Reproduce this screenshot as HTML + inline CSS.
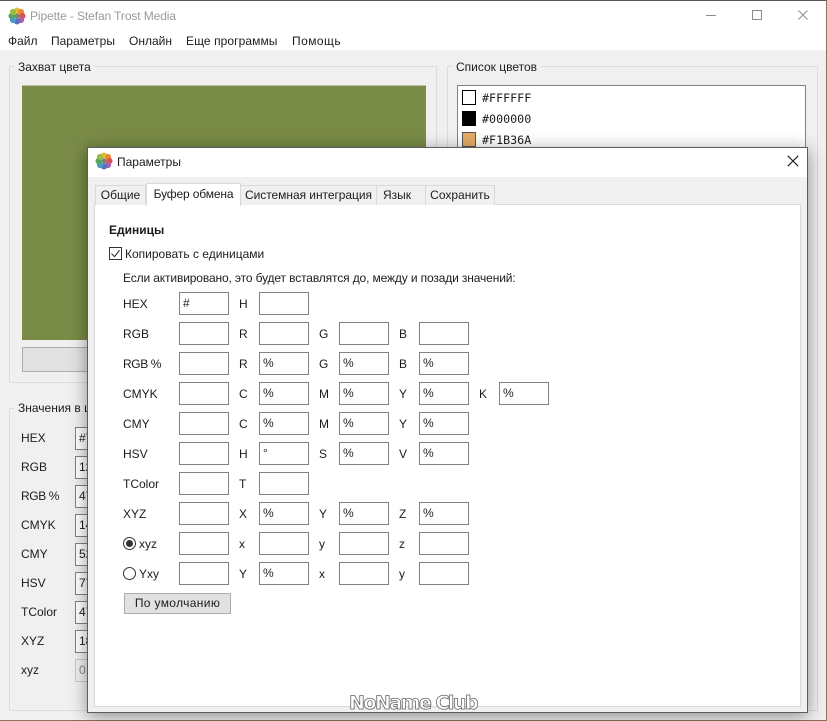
<!DOCTYPE html>
<html><head><meta charset="utf-8">
<style>
html,body{margin:0;padding:0;width:827px;height:721px;overflow:hidden;background:#8a7358}
*{box-sizing:border-box}
body{position:relative;font-family:"Liberation Sans",sans-serif;font-size:12px;color:#1c1c1c}
.a{position:absolute}
.t{position:absolute;white-space:nowrap;line-height:16px;height:16px}
.b{position:absolute;width:50px;height:23px;border:1px solid #828282;background:#fff;font-size:12px;line-height:21px;padding-left:3px;color:#222}
.g{position:absolute;border:1px solid #dcdcdc}
.tab{position:absolute;top:185px;height:20px;background:#f0f0f0;border:1px solid #d9d9d9;border-bottom:none;line-height:19px;text-align:center;white-space:nowrap}
.lb{position:absolute;left:75px;width:30px;height:23px;border:1px solid #828282;background:#fff;line-height:21px;padding-left:3px}
</style></head><body>
<div class="a" style="left:0;top:0;width:826px;height:720px;background:#f0f0f0;border-top:1px solid #555"></div>
<div class="a" style="left:0;top:1px;width:826px;height:49px;background:#fff"></div>

<svg class="a" style="left:8px;top:7px" width="18" height="18" viewBox="0 0 18 18"><g>
<circle cx="9" cy="3.6" r="3.1" fill="#e8bb35"/><circle cx="13" cy="5" r="3.1" fill="#e88a3a"/><circle cx="14.4" cy="9" r="3.1" fill="#d9544e"/><circle cx="13" cy="13" r="3.1" fill="#a960ad"/><circle cx="9" cy="14.4" r="3.1" fill="#5a70c0"/><circle cx="5" cy="13" r="3.1" fill="#4a98cc"/><circle cx="3.6" cy="9" r="3.1" fill="#4fa860"/><circle cx="5" cy="5" r="3.1" fill="#9dba42"/><circle cx="9" cy="9" r="2.5" fill="#7d8268"/></g></svg>
<div class="t" style="left:30px;top:8px;color:#9a9a9a;font-size:12px;letter-spacing:-.1px">Pipette - Stefan Trost Media</div>
<svg class="a" style="left:700px;top:8px" width="110" height="14" viewBox="0 0 110 14" fill="none" stroke="#8c8c8c"><path d="M6 7.5H16"/><rect x="52.5" y="2.5" width="9" height="9"/><path d="M98.5 2.5l9 9M107.5 2.5l-9 9"/></svg>

<div class="t" style="left:8px;top:33px">Файл</div>
<div class="t" style="left:51px;top:33px;">Параметры</div>
<div class="t" style="left:129px;top:33px">Онлайн</div>
<div class="t" style="left:186px;top:33px;letter-spacing:.08px">Еще программы</div>
<div class="t" style="left:292px;top:33px;letter-spacing:.45px">Помощь</div>

<div class="g" style="left:9px;top:66px;width:428px;height:317px"></div>
<div class="t" style="left:14px;top:59px;background:#f0f0f0;padding:0 4px">Захват цвета</div>
<div class="a" style="left:22px;top:85px;width:404px;height:255px;background:#7a8b47;border-top:1px solid #b8bea0"></div>
<div class="a" style="left:22px;top:347px;width:404px;height:25px;background:#e1e1e1;border:1px solid #adadad"></div>

<div class="g" style="left:447px;top:66px;width:371px;height:645px"></div>
<div class="t" style="left:452px;top:59px;background:#f0f0f0;padding:0 4px">Список цветов</div>
<div class="a" style="left:457px;top:85px;width:349px;height:616px;background:#fff;border:1px solid #828282"></div>
<div class="a" style="left:462px;top:90px;width:14px;height:15px;background:#fff;border:1px solid #000"></div>
<div class="a" style="left:462px;top:111px;width:14px;height:15px;background:#000"></div>
<div class="a" style="left:462px;top:132px;width:14px;height:15px;background:#e3ad66;border:1px solid #555"></div>
<div class="t" style="left:482px;top:90px;font-family:'DejaVu Sans Mono',monospace;font-size:11.7px">#FFFFFF</div>
<div class="t" style="left:482px;top:111px;font-family:'DejaVu Sans Mono',monospace;font-size:11.7px">#000000</div>
<div class="t" style="left:482px;top:132px;font-family:'DejaVu Sans Mono',monospace;font-size:11.7px">#F1B36A</div>

<div class="g" style="left:9px;top:408px;width:428px;height:303px"></div>
<div class="t" style="left:14px;top:400px;background:#f0f0f0;padding:0 4px">Значения в цветовых</div>
<div class="t" style="left:21px;top:430px">HEX</div><div class="lb" style="top:427px">#7A</div>
<div class="t" style="left:21px;top:459px">RGB</div><div class="lb" style="top:456px">122</div>
<div class="t" style="left:21px;top:488px;letter-spacing:-.4px">RGB %</div><div class="lb" style="top:485px">47</div>
<div class="t" style="left:21px;top:517px">CMYK</div><div class="lb" style="top:514px">14</div>
<div class="t" style="left:21px;top:546px">CMY</div><div class="lb" style="top:543px">52</div>
<div class="t" style="left:21px;top:575px">HSV</div><div class="lb" style="top:572px">77</div>
<div class="t" style="left:21px;top:604px">TColor</div><div class="lb" style="top:601px">47</div>
<div class="t" style="left:21px;top:633px">XYZ</div><div class="lb" style="top:630px">18</div>
<div class="t" style="left:21px;top:662px">xyz</div><div class="lb" style="top:659px;background:#f0f0f0;border-color:#ccc;color:#888">0,</div>

<!-- dialog -->
<div class="a" style="left:87px;top:147px;width:721px;height:566px;background:#f0f0f0;border:1px solid #5c5c5c;box-shadow:0 3px 16px rgba(0,0,0,.42)"></div>
<div class="a" style="left:88px;top:148px;width:719px;height:29px;background:#fff"></div>
<svg class="a" style="left:95px;top:152px" width="18" height="18" viewBox="0 0 18 18"><g>
<circle cx="9" cy="3.6" r="3.1" fill="#e8bb35"/><circle cx="13" cy="5" r="3.1" fill="#e88a3a"/><circle cx="14.4" cy="9" r="3.1" fill="#d9544e"/><circle cx="13" cy="13" r="3.1" fill="#a960ad"/><circle cx="9" cy="14.4" r="3.1" fill="#5a70c0"/><circle cx="5" cy="13" r="3.1" fill="#4a98cc"/><circle cx="3.6" cy="9" r="3.1" fill="#4fa860"/><circle cx="5" cy="5" r="3.1" fill="#9dba42"/><circle cx="9" cy="9" r="2.5" fill="#7d8268"/></g></svg>
<div class="t" style="left:117px;top:154px">Параметры</div>
<svg class="a" style="left:787px;top:155px" width="12" height="12" viewBox="0 0 12 12" fill="none" stroke="#222" stroke-width="1.1"><path d="M.8.8l10.4 10.4M11.2.8L.8 11.2"/></svg>

<div class="a" style="left:94px;top:204px;width:707px;height:503px;background:#fff;border:1px solid #d9d9d9"></div>
<div class="tab" style="left:95px;width:51px">Общие</div>
<div class="tab" style="left:240px;width:137px;letter-spacing:-.05px">Системная интеграция</div>
<div class="tab" style="left:376px;width:50px;text-align:left;padding-left:6px">Язык</div>
<div class="tab" style="left:425px;width:70px">Сохранить</div>
<div class="tab" style="left:146px;top:183px;width:95px;height:23px;background:#fff;line-height:20px;letter-spacing:-.15px">Буфер обмена</div>

<div class="t" style="left:109px;top:222px;font-weight:bold">Единицы</div>
<svg class="a" style="left:109px;top:247px" width="13" height="13" viewBox="0 0 13 13" fill="none"><rect x=".5" y=".5" width="12" height="12" stroke="#333"/><path d="M2.5 6.5l3 3.2 5-6.5" stroke="#333" stroke-width="1.1"/></svg>
<div class="t" style="left:125px;top:246px">Копировать с единицами</div>
<div class="t" style="left:123px;top:270px;letter-spacing:-.135px">Если активировано, это будет вставлятся до, между и позади значений:</div>

<div class="t" style="left:123px;top:296px">HEX</div><div class="b" style="left:179px;top:292px">#</div>
<div class="t" style="left:239px;top:296px">H</div><div class="b" style="left:259px;top:292px"></div>

<div class="t" style="left:123px;top:326px">RGB</div><div class="b" style="left:179px;top:322px"></div>
<div class="t" style="left:239px;top:326px">R</div><div class="b" style="left:259px;top:322px"></div>
<div class="t" style="left:319px;top:326px">G</div><div class="b" style="left:339px;top:322px"></div>
<div class="t" style="left:399px;top:326px">B</div><div class="b" style="left:419px;top:322px"></div>

<div class="t" style="left:123px;top:356px;letter-spacing:-.4px">RGB %</div><div class="b" style="left:179px;top:352px"></div>
<div class="t" style="left:239px;top:356px">R</div><div class="b" style="left:259px;top:352px">%</div>
<div class="t" style="left:319px;top:356px">G</div><div class="b" style="left:339px;top:352px">%</div>
<div class="t" style="left:399px;top:356px">B</div><div class="b" style="left:419px;top:352px">%</div>

<div class="t" style="left:123px;top:386px">CMYK</div><div class="b" style="left:179px;top:382px"></div>
<div class="t" style="left:239px;top:386px">C</div><div class="b" style="left:259px;top:382px">%</div>
<div class="t" style="left:319px;top:386px">M</div><div class="b" style="left:339px;top:382px">%</div>
<div class="t" style="left:399px;top:386px">Y</div><div class="b" style="left:419px;top:382px">%</div>
<div class="t" style="left:479px;top:386px">K</div><div class="b" style="left:499px;top:382px">%</div>

<div class="t" style="left:123px;top:416px">CMY</div><div class="b" style="left:179px;top:412px"></div>
<div class="t" style="left:239px;top:416px">C</div><div class="b" style="left:259px;top:412px">%</div>
<div class="t" style="left:319px;top:416px">M</div><div class="b" style="left:339px;top:412px">%</div>
<div class="t" style="left:399px;top:416px">Y</div><div class="b" style="left:419px;top:412px">%</div>

<div class="t" style="left:123px;top:446px">HSV</div><div class="b" style="left:179px;top:442px"></div>
<div class="t" style="left:239px;top:446px">H</div><div class="b" style="left:259px;top:442px">°</div>
<div class="t" style="left:319px;top:446px">S</div><div class="b" style="left:339px;top:442px">%</div>
<div class="t" style="left:399px;top:446px">V</div><div class="b" style="left:419px;top:442px">%</div>

<div class="t" style="left:123px;top:476px">TColor</div><div class="b" style="left:179px;top:472px"></div>
<div class="t" style="left:239px;top:476px">T</div><div class="b" style="left:259px;top:472px"></div>

<div class="t" style="left:123px;top:506px">XYZ</div><div class="b" style="left:179px;top:502px"></div>
<div class="t" style="left:239px;top:506px">X</div><div class="b" style="left:259px;top:502px">%</div>
<div class="t" style="left:319px;top:506px">Y</div><div class="b" style="left:339px;top:502px">%</div>
<div class="t" style="left:399px;top:506px">Z</div><div class="b" style="left:419px;top:502px">%</div>

<svg class="a" style="left:123px;top:537px" width="13" height="13" viewBox="0 0 13 13"><circle cx="6.5" cy="6.5" r="6" fill="#fff" stroke="#333"/><circle cx="6.5" cy="6.5" r="3.5" fill="#333"/></svg>
<div class="t" style="left:139px;top:536px">xyz</div><div class="b" style="left:179px;top:532px"></div>
<div class="t" style="left:239px;top:536px">x</div><div class="b" style="left:259px;top:532px"></div>
<div class="t" style="left:319px;top:536px">y</div><div class="b" style="left:339px;top:532px"></div>
<div class="t" style="left:399px;top:536px">z</div><div class="b" style="left:419px;top:532px"></div>

<svg class="a" style="left:123px;top:567px" width="13" height="13" viewBox="0 0 13 13"><circle cx="6.5" cy="6.5" r="6" fill="#fff" stroke="#333"/></svg>
<div class="t" style="left:139px;top:566px">Yxy</div><div class="b" style="left:179px;top:562px"></div>
<div class="t" style="left:239px;top:566px">Y</div><div class="b" style="left:259px;top:562px">%</div>
<div class="t" style="left:319px;top:566px">x</div><div class="b" style="left:339px;top:562px"></div>
<div class="t" style="left:399px;top:566px">y</div><div class="b" style="left:419px;top:562px"></div>

<div class="a" style="left:124px;top:593px;width:107px;height:21px;background:#e1e1e1;border:1px solid #adadad;text-align:center;line-height:19px;letter-spacing:.35px">По умолчанию</div>

<div class="t" style="left:349px;top:692px;height:22px;line-height:22px;font-family:'DejaVu Sans',sans-serif;font-size:19px;font-weight:bold;color:#fff;-webkit-text-stroke:.8px #666;letter-spacing:-1.5px">NoName Club</div>
</body></html>
